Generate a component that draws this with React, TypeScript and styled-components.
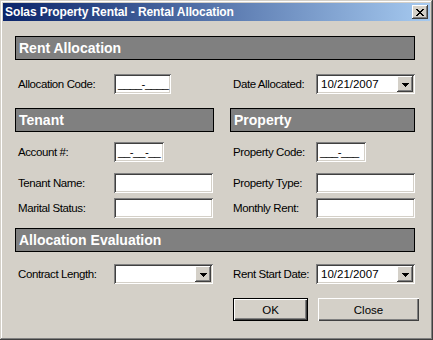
import React from "react";
import styled, { createGlobalStyle } from "styled-components";

const Global = createGlobalStyle`
  html, body { margin: 0; padding: 0; background: #d4d0c8; }
  body { font-family: "Liberation Sans", Arial, sans-serif; }
  * { box-sizing: border-box; }
`;

const FACE = "#d4d0c8";

const Window = styled.div`
  width: 433px;
  height: 340px;
  padding: 3px;
  background: ${FACE};
  box-shadow: inset -1px -1px #404040, inset 1px 1px ${FACE},
    inset -2px -2px #808080, inset 2px 2px #ffffff;
  display: flex;
  flex-direction: column;
  overflow: hidden;
`;

const TitleBar = styled.div`
  height: 18px;
  display: flex;
  align-items: center;
  justify-content: space-between;
  padding: 0 2px;
  background: linear-gradient(to right, #0a246a, #a6caf0);
`;

const TitleText = styled.span`
  color: #ffffff;
  font: bold 12px "Liberation Sans", Arial, sans-serif;
  letter-spacing: -0.1px;
  white-space: nowrap;
`;

const CloseBox = styled.div`
  width: 16px;
  height: 14px;
  background: ${FACE};
  box-shadow: inset -1px -1px #404040, inset 1px 1px #ffffff,
    inset -2px -2px #808080;
  display: flex;
  align-items: center;
  justify-content: center;
  padding-right: 1px;
`;

const Body = styled.div`
  flex: 1;
  display: flex;
  flex-direction: column;
  padding: 15px 0 0 12px;
`;

const SectionHeader = styled.div<{ $top?: number; $wide?: boolean }>`
  width: ${(p) => (p.$wide ? "400px" : "auto")};
  height: 24px;
  margin-top: ${(p) => p.$top ?? 0}px;
  border: 1px solid #000000;
  background: #808080;
  color: #ffffff;
  font: bold 14px "Liberation Sans", Arial, sans-serif;
  line-height: 22px;
  padding-left: 3px;
  white-space: nowrap;
`;

const Row = styled.div<{ $top: number }>`
  display: grid;
  grid-template-columns: 199px 185px;
  column-gap: 16px;
  align-items: center;
  margin-top: ${(p) => p.$top}px;
`;

const Field = styled.div`
  display: flex;
  align-items: center;
  height: 20px;
  padding-left: 3px;
`;

const Label = styled.span<{ $w: number }>`
  flex: 0 0 ${(p) => p.$w}px;
  font-size: 11.5px;
  letter-spacing: -0.4px;
  color: #000000;
  white-space: nowrap;
`;

const sunken = `
  background: #ffffff;
  box-shadow: inset 1px 1px #808080, inset -1px -1px #ffffff,
    inset 2px 2px #404040, inset -2px -2px ${FACE};
`;

const TextBox = styled.div<{ $w: number }>`
  width: ${(p) => p.$w}px;
  height: 20px;
  ${sunken}
  padding-left: 4px;
  font-size: 11.5px;
  line-height: 20px;
  white-space: pre;
  overflow: hidden;
  color: #000000;
`;

const Mask = styled.span`
  letter-spacing: -0.5px;
`;

const Combo = styled.div<{ $w: number }>`
  width: ${(p) => p.$w}px;
  height: 20px;
  ${sunken}
  padding: 2px;
  display: flex;
`;

const ComboText = styled.span`
  flex: 1;
  padding-left: 3px;
  font-size: 11.5px;
  line-height: 16px;
  color: #000000;
  white-space: nowrap;
`;

const DropButton = styled.div`
  flex: 0 0 16px;
  height: 16px;
  background: ${FACE};
  box-shadow: inset -1px -1px #404040, inset 1px 1px #ffffff,
    inset -2px -2px #808080;
  display: flex;
  align-items: center;
  justify-content: center;
  padding: 1px 0 0 1px;
`;

const ButtonRow = styled.div`
  display: flex;
  gap: 10px;
  margin-top: 14px;
  padding-left: 218px;
`;

const Button = styled.div<{ $w: number; $default?: boolean }>`
  width: ${(p) => p.$w}px;
  height: 23px;
  background: ${FACE};
  border: ${(p) => (p.$default ? "1px solid #000000" : "none")};
  box-shadow: inset 1px 1px #ffffff, inset -1px -1px #404040,
    inset -2px -2px #808080;
  display: flex;
  align-items: center;
  justify-content: center;
  font-size: 11.5px;
  color: #000000;
`;

const CloseGlyph = () => (
  <svg width="8" height="7" viewBox="0 0 8 7" shapeRendering="crispEdges">
    {[
      [0, 0, 2], [6, 0, 2],
      [1, 1, 2], [5, 1, 2],
      [2, 2, 4],
      [3, 3, 2],
      [2, 4, 4],
      [1, 5, 2], [5, 5, 2],
      [0, 6, 2], [6, 6, 2],
    ].map(([x, y, w], i) => (
      <rect key={i} x={x} y={y} width={w} height={1} fill="#000" />
    ))}
  </svg>
);

const ArrowGlyph = () => (
  <svg width="7" height="4" viewBox="0 0 7 4" shapeRendering="crispEdges">
    <rect x="0" y="0" width="7" height="1" fill="#000" />
    <rect x="1" y="1" width="5" height="1" fill="#000" />
    <rect x="2" y="2" width="3" height="1" fill="#000" />
    <rect x="3" y="3" width="1" height="1" fill="#000" />
  </svg>
);

const LEFT_LABEL = 96;
const RIGHT_LABEL = 83;

const DropDown = ({ w, value }: { w: number; value: string }) => (
  <Combo $w={w}>
    <ComboText>{value}</ComboText>
    <DropButton>
      <ArrowGlyph />
    </DropButton>
  </Combo>
);

export default function App() {
  return (
    <>
      <Global />
      <Window>
        <TitleBar>
          <TitleText>Solas Property Rental - Rental Allocation</TitleText>
          <CloseBox>
            <CloseGlyph />
          </CloseBox>
        </TitleBar>
        <Body>
          <SectionHeader $wide>Rent Allocation</SectionHeader>
          <Row $top={14}>
            <Field>
              <Label $w={LEFT_LABEL}>Allocation Code:</Label>
              <TextBox $w={57}>
                <Mask>____-____</Mask>
              </TextBox>
            </Field>
            <Field>
              <Label $w={RIGHT_LABEL}>Date Allocated:</Label>
              <DropDown w={99} value="10/21/2007" />
            </Field>
          </Row>

          <Row $top={14}>
            <SectionHeader>Tenant</SectionHeader>
            <SectionHeader>Property</SectionHeader>
          </Row>
          <Row $top={10}>
            <Field>
              <Label $w={LEFT_LABEL}>Account #:</Label>
              <TextBox $w={50}>
                <Mask>__-__-__</Mask>
              </TextBox>
            </Field>
            <Field>
              <Label $w={RIGHT_LABEL}>Property Code:</Label>
              <TextBox $w={50}>
                <Mask>___-___</Mask>
              </TextBox>
            </Field>
          </Row>
          <Row $top={11}>
            <Field>
              <Label $w={LEFT_LABEL}>Tenant Name:</Label>
              <TextBox $w={99} />
            </Field>
            <Field>
              <Label $w={RIGHT_LABEL}>Property Type:</Label>
              <TextBox $w={99} />
            </Field>
          </Row>
          <Row $top={5}>
            <Field>
              <Label $w={LEFT_LABEL}>Marital Status:</Label>
              <TextBox $w={99} />
            </Field>
            <Field>
              <Label $w={RIGHT_LABEL}>Monthly Rent:</Label>
              <TextBox $w={99} />
            </Field>
          </Row>

          <SectionHeader $wide $top={10}>
            Allocation Evaluation
          </SectionHeader>
          <Row $top={12}>
            <Field>
              <Label $w={LEFT_LABEL}>Contract Length:</Label>
              <DropDown w={99} value="" />
            </Field>
            <Field>
              <Label $w={RIGHT_LABEL}>Rent Start Date:</Label>
              <DropDown w={99} value="10/21/2007" />
            </Field>
          </Row>

          <ButtonRow>
            <Button $w={75} $default>
              OK
            </Button>
            <Button $w={101}>Close</Button>
          </ButtonRow>
        </Body>
      </Window>
    </>
  );
}
